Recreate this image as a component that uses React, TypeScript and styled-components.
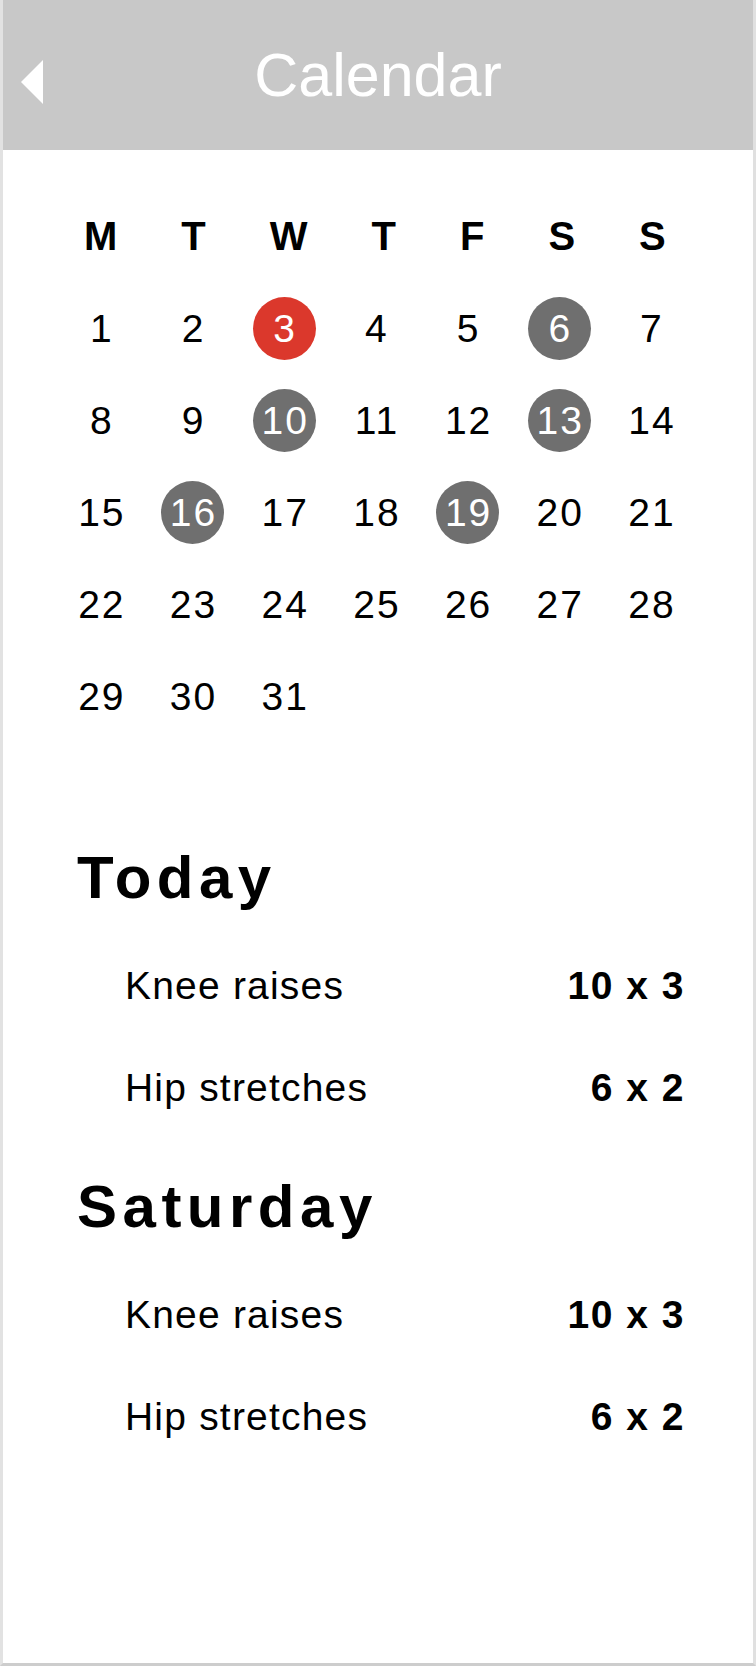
import React from 'react'
import styled, { createGlobalStyle } from 'styled-components'

const GlobalStyle = createGlobalStyle`
    html, body {
        margin: 0;
        padding: 0;
        background: #ffffff;
    }
    body {
        font-family: "Liberation Sans", Arial, Helvetica, sans-serif;
        color: #000;
    }
`

const weekdays = ['M', 'T', 'W', 'T', 'F', 'S', 'S']

// highlighted days of the month: red = today, gray = planned sessions
const marked: Record<number, 'today' | 'planned'> = {
    3: 'today',
    6: 'planned',
    10: 'planned',
    13: 'planned',
    16: 'planned',
    19: 'planned',
}

const schedule = [
    {
        title: 'Today',
        items: [
            { name: 'Knee raises', reps: '10 x 3' },
            { name: 'Hip stretches', reps: '6 x 2' },
        ],
    },
    {
        title: 'Saturday',
        items: [
            { name: 'Knee raises', reps: '10 x 3' },
            { name: 'Hip stretches', reps: '6 x 2' },
        ],
    },
]

function App() {
    const days = Array.from({ length: 31 }, (_, i) => i + 1)

    return (
        <Screen>
            <GlobalStyle />
            <Header>
                <BackButton aria-label="Back">
                    <svg width="22" height="44" viewBox="0 0 22 44">
                        <polygon points="0,22 22,0 22,44" fill="#ffffff" />
                    </svg>
                </BackButton>
                <Title>Calendar</Title>
                <span />
            </Header>

            <Calendar>
                <Weekdays>
                    {weekdays.map((d, i) => (
                        <Weekday key={i}>{d}</Weekday>
                    ))}
                </Weekdays>
                <Month>
                    {days.map((day) => (
                        <DayCell key={day}>
                            <Day $mark={marked[day]}>{day}</Day>
                        </DayCell>
                    ))}
                </Month>
            </Calendar>

            <Sessions>
                {schedule.map((s) => (
                    <Session key={s.title}>
                        <SessionTitle>{s.title}</SessionTitle>
                        <ExerciseList>
                            {s.items.map((item) => (
                                <Exercise key={item.name}>
                                    <ExerciseName>{item.name}</ExerciseName>
                                    <Reps>{item.reps}</Reps>
                                </Exercise>
                            ))}
                        </ExerciseList>
                    </Session>
                ))}
            </Sessions>
        </Screen>
    )
}

export default App

export const Screen = styled.div`
    box-sizing: border-box;
    width: 756px;
    height: 1666px;
    border-left: 3px solid #e2e2e2;
    border-right: 3px solid #e0e0e0;
    border-bottom: 3px solid #cdcdcd;
    background: #ffffff;
    display: flex;
    flex-direction: column;
`

export const Header = styled.header`
    height: 150px;
    flex-shrink: 0;
    background: #c8c8c8;
    display: grid;
    grid-template-columns: 1fr auto 1fr;
    align-items: center;
    padding-left: 18px;
`

export const BackButton = styled.button`
    justify-self: start;
    display: flex;
    border: 0;
    padding: 0;
    margin-top: 14px;
    background: transparent;
    cursor: pointer;
`

export const Title = styled.h1`
    margin: 0 0 0 -18px;
    font-size: 61px;
    line-height: 1;
    font-weight: 400;
    color: #ffffff;
`

export const Calendar = styled.div`
    margin: 40px 0 0 52px;
`

export const Weekdays = styled.div`
    height: 92px;
    display: flex;
    align-items: center;
    gap: 64px;
    padding-left: 29px;
`

export const Weekday = styled.span`
    font-size: 40px;
    line-height: 1;
    font-weight: 700;
`

export const Month = styled.div`
    display: grid;
    grid-template-columns: repeat(7, 91.7px);
    grid-auto-rows: 92px;
`

export const DayCell = styled.div`
    display: flex;
    align-items: center;
    justify-content: center;
`

export const Day = styled.span<{ $mark?: 'today' | 'planned' }>`
    width: 63px;
    height: 63px;
    border-radius: 50%;
    display: flex;
    align-items: center;
    justify-content: center;
    font-size: 39px;
    line-height: 1;
    letter-spacing: 2px;
    text-indent: 2px;
    color: ${(p) => (p.$mark ? '#ffffff' : '#000000')};
    background: ${(p) =>
        p.$mark === 'today' ? '#db382c' : p.$mark === 'planned' ? '#6f6f6f' : 'transparent'};
`

export const Sessions = styled.div`
    display: flex;
    flex-direction: column;
    gap: 70px;
    margin-top: 106px;
    padding: 0 68px 0 74px;
`

export const Session = styled.section`
    display: flex;
    flex-direction: column;
    gap: 58px;
`

export const SessionTitle = styled.h2`
    margin: 0;
    font-size: 60px;
    line-height: 1;
    font-weight: 700;
    letter-spacing: 5.5px;
`

export const ExerciseList = styled.div`
    display: flex;
    flex-direction: column;
    gap: 63px;
    padding-left: 48px;
`

export const Exercise = styled.div`
    display: flex;
    justify-content: space-between;
    align-items: baseline;
    font-size: 39px;
    line-height: 1;
`

export const ExerciseName = styled.span`
    font-weight: 400;
    letter-spacing: 1.2px;
`

export const Reps = styled.span`
    font-weight: 700;
    letter-spacing: 1.5px;
`
